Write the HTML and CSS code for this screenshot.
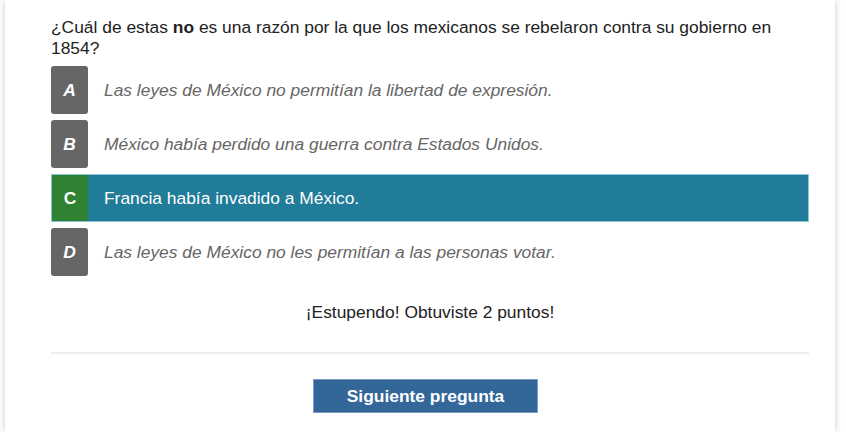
FILE: index.html
```html
<!DOCTYPE html>
<html lang="es">
<head>
<meta charset="utf-8">
<link rel="stylesheet" href="styles.css">
</head>
<body>
<div class="card">
  <p class="question">¿Cuál de estas <b>no</b> es una razón por la que los mexicanos se rebelaron contra su gobierno en<br>1854?</p>
  <div class="options">
    <div class="option"><span class="letter">A</span><span class="text">Las leyes de México no permitían la libertad de expresión.</span></div>
    <div class="option"><span class="letter">B</span><span class="text">México había perdido una guerra contra Estados Unidos.</span></div>
    <div class="option selected"><span class="letter">C</span><span class="text">Francia había invadido a México.</span></div>
    <div class="option"><span class="letter">D</span><span class="text">Las leyes de México no les permitían a las personas votar.</span></div>
  </div>
  <p class="feedback">¡Estupendo! Obtuviste 2 puntos!</p>
  <hr class="sep">
  <div class="actions"><button class="next">Siguiente pregunta</button></div>
</div>
</body>
</html>
```
FILE: styles.css
```css
html, body {
  margin: 0;
  padding: 0;
  background: #ffffff;
  height: 100%;
  overflow: hidden;
}
body {
  font-family: "Liberation Sans", Arial, sans-serif;
  color: #222;
  padding-left: 5px;
}
.card {
  width: 830px;
  height: 432px;
  background: #fff;
  box-shadow: 0 0 6px rgba(0,0,0,0.22);
  padding: 17px 26px 0 46px;
  box-sizing: border-box;
}
.question {
  margin: 0;
  font-size: 17.4px;
  line-height: 21px;
  color: #222;
}
.question b { font-weight: bold; }
.options {
  margin-top: 7px;
  display: flex;
  flex-direction: column;
  gap: 6px;
}
.option {
  height: 48px;
  display: flex;
  align-items: center;
  box-sizing: border-box;
}
.letter {
  width: 37px;
  height: 48px;
  flex: none;
  background: #666666;
  color: #fff;
  border-radius: 3px;
  font-weight: bold;
  font-style: italic;
  font-size: 17.4px;
  display: flex;
  align-items: center;
  justify-content: center;
}
.text {
  margin-left: 16px;
  font-size: 17.4px;
  font-style: italic;
  color: #666;
}
.option.selected {
  background: #217c99;
  border: 1px solid #8cc3d6;
}
.option.selected .letter {
  background: #2f8232;
  border-radius: 0;
  height: 46px;
  width: 36px;
  font-style: normal;
}
.option.selected .text {
  font-style: normal;
  color: #fff;
}
.feedback {
  margin: 26px 0 0;
  text-align: center;
  font-size: 17.4px;
  line-height: 21px;
  color: #222;
}
.sep {
  margin: 29px 0 0;
  border: 0;
  border-top: 2px solid #eeeeee;
  height: 0;
}
.actions {
  display: flex;
  justify-content: center;
  margin-top: 25px;
}
.next {
  width: 225px;
  height: 34px;
  background: #336699;
  border: 1px solid #7a9cc0;
  color: #fff;
  font-family: "Liberation Sans", Arial, sans-serif;
  font-size: 17.4px;
  font-weight: bold;
  padding: 0;
  margin-right: 9px;
}
```
